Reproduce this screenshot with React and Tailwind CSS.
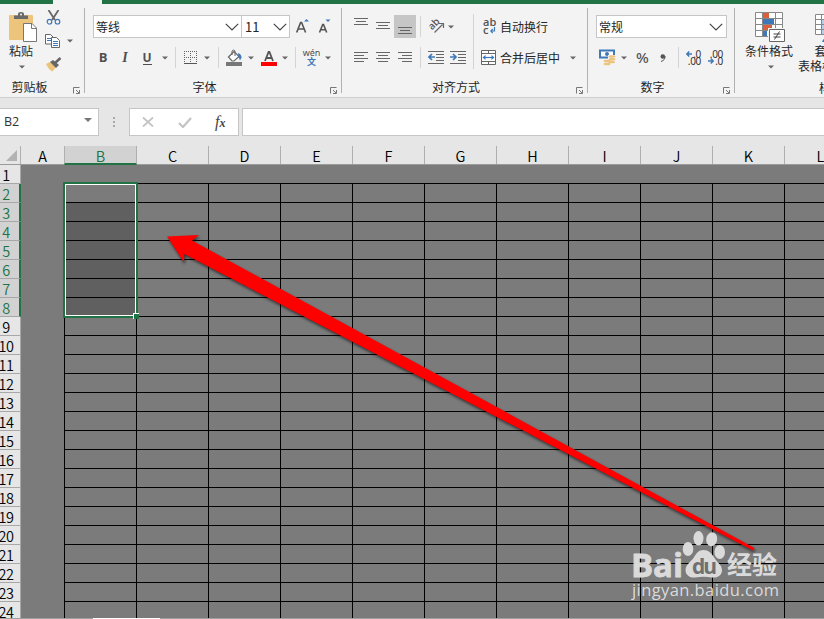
import React from "react";

const columns = ["C", "D", "E", "F", "G", "H", "I", "J", "K", "L"];
const rows = Array.from({ length: 24 }, (_, i) => i + 1);

const Caret = ({ className = "" }) => (
  <svg className={`shrink-0 ${className}`} width="6" height="4" viewBox="0 0 6 4">
    <path d="M0 0.5h6L3 3.5z" fill="#666" />
  </svg>
);

const Chevron = ({ className = "" }) => (
  <svg className={`shrink-0 ${className}`} width="14" height="8" viewBox="0 0 14 8">
    <path d="M0.8 0.8 7 7l6.2-6.2" fill="none" stroke="#444" strokeWidth="1.2" />
  </svg>
);

const Sep = ({ className = "" }) => <div className={`w-px shrink-0 bg-[#d4d4d4] ${className}`} />;

const Launcher = () => (
  <svg className="mb-[-1px] mr-1 shrink-0" width="7" height="7" viewBox="0 0 7 7">
    <path d="M0.5 6.5v-6h6" fill="none" stroke="#777" />
    <path d="M3 3l3 3M6.5 3v3.5H3" fill="none" stroke="#777" />
  </svg>
);

const Group = ({ label, width, labelPad = "pr-1.5", children }) => (
  <div className={`flex h-[85px] shrink-0 flex-col border-r border-[#b1b1b1] ${width}`}>
    <div className="h-[67px] shrink-0">{children}</div>
    <div className="flex h-[18px] shrink-0 items-end">
      <span className={`flex-1 translate-y-[3px] text-center leading-[18px] ${labelPad}`}>{label}</span>
      <Launcher />
    </div>
  </div>
);

// horizontal strokes, each given as [x, y, length]
const Lines = ({ lines, className = "" }) => (
  <svg className={`shrink-0 ${className}`} width="22" height="23" viewBox="0 0 22 23" shapeRendering="crispEdges">
    {lines.map(([x, y, w]) => (
      <rect key={y} x={x} y={y} width={w} height="1" fill="#666" />
    ))}
  </svg>
);

const ClipboardGroup = () => (
  <div className="flex h-full pl-[7px]">
    <div className="flex w-[28px] flex-col items-center pt-1">
      <svg className="ml-0.5 shrink-0" width="30" height="30" viewBox="0 0 30 30">
        <rect x="2" y="3" width="24" height="25" rx="1" fill="#ecc47c" />
        <path d="M7 7V3.5h4V2q0-2 3-2t3 2v1.500h4V7z" fill="#6a6a6a" />
        <circle cx="14" cy="2.600" r="1" fill="#f3f3f3" />
        <path d="M16.500 11.500h8.500l4.500 4.500v13.500H16.500z" fill="#fff" stroke="#777" />
        <path d="M24.500 11.500v5h5" fill="none" stroke="#777" />
      </svg>
      <span className="whitespace-nowrap leading-[18px]">粘贴</span>
      <Caret className="ml-0.5 mt-[5px]" />
    </div>
    <div className="flex w-[40px] flex-col pl-[9px]">
      <svg className="ml-0.5 mt-0.5 shrink-0" width="15" height="15" viewBox="0 0 15 15">
        <path d="M2.500 0l6.500 10M12.500 0L6 10" stroke="#666" strokeWidth="1.800" fill="none" />
        <circle cx="3.500" cy="11.700" r="2.300" stroke="#4179b5" strokeWidth="1.200" fill="none" />
        <circle cx="11.500" cy="11.700" r="2.300" stroke="#4179b5" strokeWidth="1.200" fill="none" />
      </svg>
      <div className="mt-[9px] flex items-center gap-[7px]">
        <svg className="ml-[1px] shrink-0" width="15" height="14" viewBox="0 0 15 14">
          <path d="M.5.5h5l3 3v6.500h-8z" fill="#fff" stroke="#666" />
          <path d="M2 4.500h4M2 6.500h4" stroke="#4179b5" />
          <path d="M6.500 3.500h5l3 3v7h-8z" fill="#fff" stroke="#666" />
          <path d="M8 7.500h5M8 9.500h5M8 11.500h5" stroke="#4179b5" />
        </svg>
        <Caret />
      </div>
      <svg className="ml-0.5 mt-[9px] shrink-0" width="16" height="15" viewBox="0 0 16 15">
        <path d="M0 7l4-2 6 5-3.500 4.500q-3-.5-6.500-7.500" fill="#ecc47c" />
        <path d="M4 5l3-2 6 5-3 3z" fill="#666" />
        <path d="M9 6l5.500-5" stroke="#666" strokeWidth="2.500" />
      </svg>
    </div>
  </div>
);

const FontGroup = () => (
  <div className="flex flex-col pl-2 pt-[7px]">
    <div className="flex h-[23px]">
      <div className="flex w-[149px] items-center justify-between border border-[#c6c6c6] bg-white pl-0.5 pr-[2px]">
        <span>等线</span>
        <Chevron />
      </div>
      <div className="-ml-px flex w-[49px] items-center justify-between border border-[#c6c6c6] bg-white pl-[3px] pr-[2px]">
        <span className="text-[13px]">11</span>
        <Chevron />
      </div>
      <svg className="ml-1.5 shrink-0" width="38" height="23" viewBox="0 0 38 23">
        <path d="M.7 17.500L4.600 7.500h1l4 10M2 14h6.200" fill="none" stroke="#555" strokeWidth="1.600" />
        <path d="M8 6.500L10.500 4l2.500 2.500z" fill="#3f78b8" />
        <path d="M23.500 17.500l3.200-8h.8l3.200 8M24.700 14.700h4.900" fill="none" stroke="#555" strokeWidth="1.600" />
        <path d="M29.500 4.500h5L32 7z" fill="#3f78b8" />
      </svg>
    </div>
    <div className="mt-2 flex h-[23px] items-center font-['Open_Sans'] text-[13px] font-bold text-[#505050]">
      <span className="w-5 text-center">B</span>
      <span className="w-6 text-center font-['Liberation_Serif'] text-sm italic">I</span>
      <span className="w-5 text-center leading-3">
        <span className="inline-block h-[13px] w-[9px] border-b border-[#505050] text-center text-xs leading-[11px]">U</span>
      </span>
      <Caret className="ml-[5px]" />
      <Sep className="ml-[7px] h-[21px]" />
      <svg className="ml-2 shrink-0" width="13" height="13" viewBox="0 0 13 13" shapeRendering="crispEdges">
        <path d="M0 .5h13M0 6.500h13M.5 0v13M6.500 0v13M12.500 0v13" stroke="#666" strokeDasharray="1 1" fill="none" />
        <path d="M0 12.500h13" stroke="#555" />
      </svg>
      <Caret className="ml-[7px]" />
      <Sep className="ml-2 h-[21px]" />
      <svg className="ml-[7px] shrink-0" width="16" height="17" viewBox="0 0 16 17">
        <path d="M2.500 8L8 2.500l5 5-5 4.500H6z" fill="#fff" stroke="#666" strokeWidth="1.200" />
        <path d="M6 6V2q1.500-2 3 0v5" fill="none" stroke="#666" />
        <path d="M12 4q3.500 1 3.500 4.500l-1.500 3-1.500-4z" fill="#3f78b8" />
        <rect y="13" width="16" height="4" fill="#777" />
      </svg>
      <Caret className="ml-[6px]" />
      <svg className="ml-[7px] shrink-0" width="16" height="17" viewBox="0 0 16 17">
        <path d="M4 12L7.600 3h.8L12 12M5.200 9h5.600" fill="none" stroke="#555" strokeWidth="1.800" />
        <rect y="13" width="16" height="4" fill="#f00" />
      </svg>
      <Caret className="ml-[5px]" />
      <Sep className="ml-[7px] h-[21px]" />
      <div className="ml-[7px] flex w-[17px] flex-col items-center font-normal">
        <span className="h-2 font-['Noto_Sans'] text-[9px] leading-[7px]">wén</span>
        <span className="h-2.5 font-['Noto_Sans_CJK_SC'] text-[9px] font-bold leading-[9px] text-[#3f78b8]">文</span>
      </div>
      <Caret className="ml-[5px]" />
    </div>
  </div>
);

const AlignGroup = () => (
  <div className="flex pl-2 pt-[6px]">
    <div className="flex flex-col pt-px">
      <div className="flex h-[23px]">
        <Lines lines={[[4, 3, 14], [6, 6, 10], [4, 9, 14]]} />
        <Lines lines={[[4, 7, 14], [6, 10, 10], [4, 13, 14]]} />
        <Lines className="bg-[#c6c6c6]" lines={[[4, 12, 14], [6, 15, 10], [4, 18, 14]]} />
      </div>
      <div className="mt-2 flex h-[23px]">
        <Lines lines={[[4, 6, 14], [4, 9, 10], [4, 12, 14], [4, 15, 10]]} />
        <Lines lines={[[4, 6, 14], [6, 9, 10], [4, 12, 14], [6, 15, 10]]} />
        <Lines lines={[[4, 6, 14], [8, 9, 10], [4, 12, 14], [8, 15, 10]]} />
      </div>
    </div>
    <div className="ml-1 flex flex-col gap-[10px] pt-[2px]">
      <Sep className="h-[21px]" />
      <Sep className="h-[21px]" />
    </div>
    <div className="ml-[7px] flex w-[45px] flex-col pt-px">
      <div className="flex h-[23px] items-center">
        <svg className="shrink-0 overflow-visible" width="17" height="16" viewBox="0 0 17 16">
          <text transform="translate(4 11.500) rotate(-45)" fontFamily="Open Sans" fontSize="10" fontWeight="600" fill="#555">ab</text>
          <path d="M6.500 13.500L14.500 5.500M11 4.500h4.500V9" fill="none" stroke="#666" strokeWidth="1.200" />
        </svg>
        <Caret className="ml-[3px]" />
      </div>
      <div className="mt-2 flex h-[23px] items-center gap-[6px]">
        <svg className="shrink-0" width="16" height="13" viewBox="0 0 16 13">
          <path d="M0 .5h16M8 3.500h8M8 6.500h8M8 9.500h8M0 12.500h16" stroke="#666" />
          <path d="M7 6H1.500M4 3L1 6l3 3" stroke="#3f78b8" strokeWidth="1.700" fill="none" />
        </svg>
        <svg className="shrink-0" width="16" height="13" viewBox="0 0 16 13">
          <path d="M0 .5h16M8 3.500h8M8 6.500h8M8 9.500h8M0 12.500h16" stroke="#666" />
          <path d="M0 6h5.500M3 3l3 3-3 3" stroke="#3f78b8" strokeWidth="1.700" fill="none" />
        </svg>
      </div>
    </div>
    <Sep className="h-[55px]" />
    <div className="ml-[7px] flex flex-col pt-px">
      <div className="flex h-[23px] items-center">
        <div className="relative ml-0.5 flex h-[18px] w-[13px] shrink-0 flex-col font-['Open_Sans'] text-[11px] font-semibold text-[#555]">
          <span className="h-2 leading-[8px]">ab</span>
          <span className="h-2 leading-[8px]">c</span>
          <svg className="absolute left-[7px] top-[9px]" width="6" height="7" viewBox="0 0 6 7">
            <path d="M4.500 0v4H1M2.700 2L.8 4l1.900 2" fill="none" stroke="#3f78b8" strokeWidth="1.200" />
          </svg>
        </div>
        <span className="ml-1">自动换行</span>
      </div>
      <div className="mt-2 flex h-[23px] items-center">
        <svg className="shrink-0" width="15" height="15" viewBox="0 0 15 15">
          <path d="M.5.5h14v14H.5zM.5 3.500h14M.5 11.500h14M7.500 0v3.500M7.500 11.500V15" fill="#fff" stroke="#666" />
          <path d="M3 7.500h9" stroke="#3f78b8" strokeWidth="1.200" />
          <path d="M1.500 7.500L4.500 5v5zM13.500 7.500L10.500 5v5z" fill="#3f78b8" />
        </svg>
        <span className="ml-1">合并后居中</span>
        <Caret className="ml-[10px]" />
      </div>
    </div>
  </div>
);

const NumberGroup = () => (
  <div className="flex flex-col pl-2 pt-[7px]">
    <div className="flex h-[23px] w-[131px] items-center justify-between border border-[#c6c6c6] bg-white pl-0.5 pr-[3px]">
      <span>常规</span>
      <Chevron />
    </div>
    <div className="mt-2 flex h-[23px] items-center pl-[3px]">
      <svg className="shrink-0" width="17" height="17" viewBox="0 0 17 17">
        <path d="M1 1.500h14v7H1z" fill="#fff" stroke="#3f78b8" strokeWidth="2" />
        <circle cx="8" cy="5" r="2" fill="#3f78b8" />
        <path d="M9 6h8v9H4v-4h5z" fill="#f3f3f3" />
        <g fill="#ecc47c">
          <ellipse cx="13" cy="7.500" rx="3.500" ry="1.300" />
          <ellipse cx="13" cy="10.300" rx="3.500" ry="1.300" />
          <ellipse cx="12.500" cy="13" rx="3.500" ry="1.300" />
          <ellipse cx="8" cy="12" rx="3.500" ry="1.300" />
          <ellipse cx="8" cy="15" rx="3.500" ry="1.300" />
        </g>
      </svg>
      <Caret className="ml-[5px]" />
      <span className="ml-[9px] w-[14px] font-['Noto_Sans'] text-[15px] font-medium text-[#555]">%</span>
      <svg className="ml-[10px] shrink-0" width="6" height="8" viewBox="0 0 6 8">
        <circle cx="2.800" cy="2.500" r="2.300" fill="#555" />
        <path d="M5 2q.5 4-4 5.500" fill="none" stroke="#555" />
      </svg>
      <Sep className="ml-3 h-[21px]" />
      <div className="ml-[7px] flex font-['Noto_Sans'] text-[10px] tracking-[-0.3px] text-[#333]">
        <div className="flex w-[15px] flex-col items-end">
          <span className="flex h-[7px] items-center gap-px leading-[7px]">
            <svg width="6" height="6" viewBox="0 0 6 6">
              <path d="M6 3H1M3.300.5L.8 3l2.500 2.500" fill="none" stroke="#3f78b8" strokeWidth="1.500" />
            </svg>
            .0
          </span>
          <span className="h-[7px] leading-[7px]">.00</span>
        </div>
        <div className="ml-[7px] flex w-[15px] flex-col items-end">
          <span className="h-[7px] leading-[7px]">.00</span>
          <span className="flex h-[7px] items-center gap-px leading-[7px]">
            <svg width="6" height="6" viewBox="0 0 6 6">
              <path d="M0 3h5M2.700.5L5.200 3 2.700 5.500" fill="none" stroke="#3f78b8" strokeWidth="1.500" />
            </svg>
            .0
          </span>
        </div>
      </div>
    </div>
  </div>
);

const StylesGroup = () => (
  <div className="flex flex-1 gap-[5px] pl-[10px] pt-1">
    <div className="flex w-12 shrink-0 flex-col items-center">
      <svg className="ml-0.5 shrink-0" width="30" height="30" viewBox="0 0 30 30">
        <path d="M.5.5h27v24H.5z" fill="#fff" />
        <path d="M8 1h6v5H8zM8 13h9v5H8z" fill="#d9603f" />
        <path d="M8 7h11v5H8zM8 19h4v5H8z" fill="#3f78b8" />
        <path d="M.5.500h27v24H.5zM.5 6.500h27M.5 12.500h27M.5 18.500h27M7.500.5v24M20.500.5v24" fill="none" stroke="#888" />
        <path d="M13 16h17v14H13z" fill="#f3f3f3" />
        <path d="M14.500 17.500h15v12h-15z" fill="#fff" stroke="#666" />
        <path d="M18.500 22h7M18.500 25h7M24.500 19.500l-5 8" stroke="#444" fill="none" />
      </svg>
      <span className="whitespace-nowrap leading-[18px]">条件格式</span>
      <Caret className="ml-[4px] mt-[5px]" />
    </div>
    <div className="flex w-12 shrink-0 flex-col items-center">
      <svg className="ml-[3px] mt-0.5 shrink-0" width="18" height="28" viewBox="0 0 18 28">
        <path d="M.5.5h20v20H.5z" fill="#fff" />
        <path d="M7 5h14v16H7z" fill="#b5d0ea" />
        <path d="M.5.5h20v20H.5zM.5 5.500h20M.5 10.500h20M.5 15.500h20M6.500.5v20M13.500.5v20" fill="none" stroke="#888" />
        <path d="M7 28q1-4 6-5v5z" fill="#3f78b8" />
      </svg>
      <span className="ml-[9px] whitespace-nowrap leading-[18px]">套用</span>
      <span className="-mt-[3px] whitespace-nowrap leading-[18px]">表格格式</span>
      <span className="ml-[18px] mt-[4px] whitespace-nowrap leading-[18px]">样式</span>
    </div>
  </div>
);

const FormulaBar = () => (
  <div className="flex h-[48px] shrink-0 border-t border-[#d0d0d0] bg-[#e6e6e6] pt-[10px]">
    <div className="flex h-[28px] w-[99px] items-center justify-between border-y border-r border-[#c6c6c6] bg-white pl-1 pr-1.5">
      <span className="font-['Open_Sans'] text-[12.5px] text-[#333]">B2</span>
      <svg className="-mt-1" width="8" height="4" viewBox="0 0 8 4">
        <path d="M0 0h8L4 4z" fill="#777" />
      </svg>
    </div>
    <div className="ml-[14px] flex h-[28px] w-[2px] flex-col justify-center gap-[2px]">
      <i className="h-[2px] bg-[#a8a8a8]" />
      <i className="h-[2px] bg-[#a8a8a8]" />
      <i className="h-[2px] bg-[#a8a8a8]" />
    </div>
    <div className="ml-[14px] flex h-[28px] w-[110px] items-center border border-[#c6c6c6] bg-white pl-3">
      <svg width="12" height="10" viewBox="0 0 12 10">
        <path d="M1 .5l10 9M11 .5L1 9.500" stroke="#c4c4c4" strokeWidth="1.800" />
      </svg>
      <svg className="ml-6" width="14" height="11" viewBox="0 0 14 11">
        <path d="M1 6l4 4 8-9" fill="none" stroke="#c4c4c4" strokeWidth="2.200" />
      </svg>
      <span className="ml-[23px] flex items-baseline font-['Liberation_Serif'] text-[16px] italic leading-4 text-[#444]">
        f<span className="text-[12px] font-bold leading-3">x</span>
      </span>
    </div>
    <div className="ml-[3px] h-[28px] flex-1 border-y border-l border-[#c6c6c6] bg-white" />
  </div>
);

const ColumnHeader = () => (
  <div className="flex h-[19px] shrink-0 border-b border-[#9b9b9b] bg-[#e6e6e6] text-[14.5px] font-[350] leading-[19px] text-black">
    <div className="flex w-[21px] shrink-0 items-start justify-end border-r border-[#b0b0b0] pr-[3px] pt-1">
      <svg width="11" height="11" viewBox="0 0 11 11">
        <path d="M11 0v11H0z" fill="#b2b2b2" />
      </svg>
    </div>
    <div className="w-[43px] shrink-0 text-center">A</div>
    <div className="-mb-px h-[19px] w-[73px] shrink-0 border-x border-b-2 border-x-[#b0b0b0] border-b-[#217346] bg-[#d2d2d2] text-center text-[#217346]">B</div>
    {columns.map((c) => (
      <div key={c} className="w-[72px] shrink-0 border-r border-[#b0b0b0] text-center">{c}</div>
    ))}
  </div>
);

const Row = ({ n }) => {
  const selected = n >= 2 && n <= 8;
  return (
    <div className="flex h-[19px] shrink-0">
      <div
        className={`h-[19px] w-[21px] shrink-0 border-b border-b-[#a8a8a8] text-[14.5px] font-[350] leading-[19px] ${
          selected ? "border-r-2 border-r-[#217346] bg-[#d2d2d2] text-[#217346]" : "border-r border-r-[#a8a8a8] bg-[#e6e6e6] text-black"
        }`}
      >
        <div className="-ml-1 flex w-5 justify-center tracking-[-0.4px]">{n}</div>
      </div>
      <div className={`w-11 shrink-0 ${n > 1 ? "border-r border-black" : ""}`} />
      <div
        className={`w-[72px] shrink-0 border-b border-black ${n > 1 ? "border-r" : ""} ${n > 2 && n < 9 ? "bg-[#606060]" : ""}`}
      />
      {columns.map((c) => (
        <div key={c} className={`w-[72px] shrink-0 border-b border-black ${n > 1 ? "border-r" : ""}`} />
      ))}
    </div>
  );
};

const Selection = () => (
  <div className="absolute left-[63px] top-[37px] h-[136px] w-[75px] border-2 border-[#217346]">
    <div className="h-full w-full border border-white" />
    <div className="absolute -bottom-[3px] -right-[3px] h-[6px] w-[6px] border-l border-t border-white bg-[#217346]" />
  </div>
);

const Arrow = () => (
  <svg className="absolute left-0 top-0 overflow-visible" width="824" height="474" viewBox="0 145 824 474">
    <path
      d="M167 236.500L199 235L192 240.500L754.500 548L753 550.500L184.300 254L184 262.500Z"
      fill="#f00"
      style={{ filter: "drop-shadow(1px 2px 1.5px rgba(0,0,0,0.6))" }}
    />
  </svg>
);

const Watermark = () => (
  <svg className="absolute left-[625px] top-[381px] overflow-visible" width="165" height="80" viewBox="625 526 165 80" fill="#dadada">
    <text x="631" y="576.500" fontFamily="Open Sans" fontSize="33" fontWeight="700" textLength="52" stroke="#dadada" strokeWidth="0.800">Bai</text>
    <ellipse cx="688" cy="549" rx="5.300" ry="7" />
    <ellipse cx="698.500" cy="538.300" rx="5" ry="7.300" />
    <ellipse cx="711.700" cy="539.300" rx="5.500" ry="7" transform="rotate(10 711.700 539.300)" />
    <ellipse cx="719.700" cy="552" rx="5.300" ry="7" />
    <path d="M703.500 550c5 0 8 3 11 8s7.500 7 7.500 12c0 6-5 8-10 7.500-6-1-11-1-17 0-6 .5-9.500-3-9.500-7.500 0-5 5-8 8-12 3-5 5-8 10-8z" />
    <text x="692" y="574" fontFamily="Open Sans" fontSize="21" fontWeight="700" fill="#707070" textLength="25">du</text>
    <text x="727" y="574" fontFamily="Noto Sans CJK SC" fontSize="25" fontWeight="700">经验</text>
    <text x="632" y="596" fontFamily="Open Sans" fontSize="16.500" fontWeight="500" textLength="147">jingyan.baidu.com</text>
  </svg>
);

const App = () => {
  return (
    <div className="flex h-[619px] w-[824px] flex-col overflow-hidden bg-[#f3f3f3] font-['Noto_Sans_CJK_SC',sans-serif] text-[12px] text-[#262626]">
      <div className="flex h-1 shrink-0 bg-[#217346]">
        <div className="ml-[53px] w-[49px] bg-[#f3f3f3]" />
      </div>
      <div className="flex h-[93px] shrink-0 pt-1">
        <Group label="剪贴板" width="w-[85px]" labelPad="pr-[14px]"><ClipboardGroup /></Group>
        <Group label="字体" width="w-[257px]"><FontGroup /></Group>
        <Group label="对齐方式" width="w-[246px]"><AlignGroup /></Group>
        <Group label="数字" width="w-[147px]"><NumberGroup /></Group>
        <StylesGroup />
      </div>
      <FormulaBar />
      <div className="relative flex h-[474px] shrink-0 flex-col overflow-hidden bg-[#7b7b7b]">
        <div className="h-px shrink-0 bg-[#e6e6e6]" />
        <ColumnHeader />
        <div className="flex h-[453px] shrink-0 flex-col overflow-hidden">
          {rows.map((n) => (
            <Row key={n} n={n} />
          ))}
        </div>
        <div className="h-px shrink-0 bg-[#a0a0a0] pl-[93px]">
          <div className="h-px w-[67px] bg-white" />
        </div>
        <Selection />
        <Arrow />
        <Watermark />
      </div>
    </div>
  );
};

export default App;
